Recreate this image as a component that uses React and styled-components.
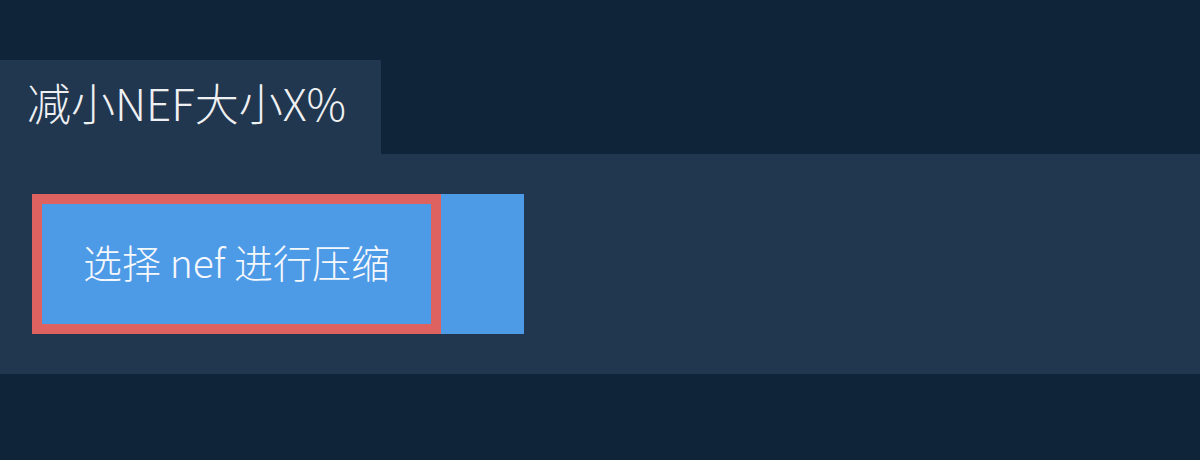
import React from 'react'
import styled, { createGlobalStyle } from 'styled-components'

const GlobalStyle = createGlobalStyle`
  html, body {
    margin: 0;
    padding: 0;
    background: #0f2339;
  }
  body {
    font-family: "Noto Sans CJK SC", "Noto Sans", sans-serif;
  }
`

const Page = styled.div`
  width: 1200px;
  height: 460px;
  padding-top: 60px;
  box-sizing: border-box;
  background: #0f2339;
`

const Tab = styled.div`
  display: inline-flex;
  align-items: center;
  height: 94px;
  padding: 0 35px 10px 27px;
  box-sizing: border-box;
  background: #21364f;
  color: #eef0f2;
  font-size: 44px;
  font-weight: 300;
  vertical-align: top;
`

const Panel = styled.div`
  display: flex;
  padding: 40px 32px;
  background: #21364f;
`

const ButtonGroup = styled.div`
  display: flex;
  height: 140px;
  background: #4d9ae6;
`

const SelectButton = styled.button`
  display: flex;
  align-items: center;
  justify-content: center;
  width: 409px;
  height: 140px;
  padding: 0 0 6px;
  border: 10px solid #dd6260;
  background: #4d9ae6;
  color: #f5f8fc;
  font-family: inherit;
  font-size: 39px;
  font-weight: 300;
  box-sizing: border-box;
  cursor: pointer;
`

const Extra = styled.div`
  width: 83px;
`

export default function App () {
  return (
    <Page>
      <GlobalStyle />
      <Tab>减小NEF大小X%</Tab>
      <Panel>
        <ButtonGroup>
          <SelectButton>选择 nef 进行压缩</SelectButton>
          <Extra />
        </ButtonGroup>
      </Panel>
    </Page>
  )
}
